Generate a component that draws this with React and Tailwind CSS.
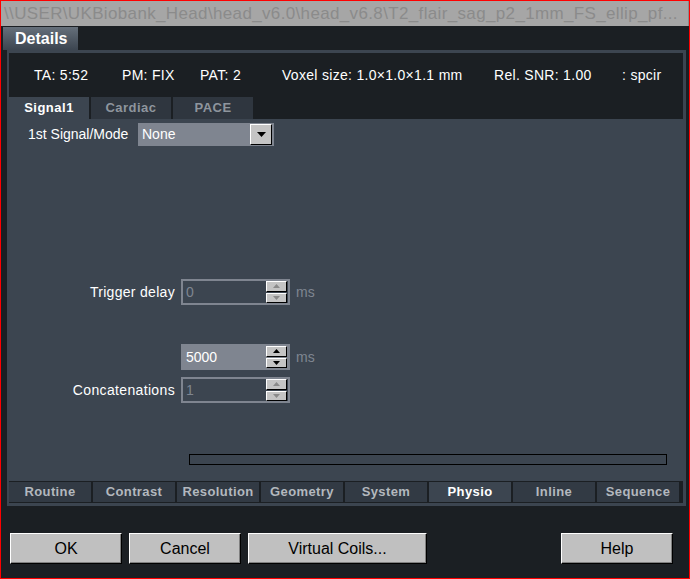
import React from 'react'

const DARK = 'bg-[#1b1f23]'

const SubTab = ({ label, active }) => (
  <div
    className={`w-[80px] h-[22px] flex items-center justify-center text-[13px] font-bold tracking-[0.5px] ${
      active ? 'bg-[#3c4550] text-white' : 'bg-[#2f363f] text-[#8e959d]'
    }`}
  >
    {label}
  </div>
)

const BottomTab = ({ label, active }) => (
  <div
    className={`w-[82px] h-[20px] flex items-center justify-center text-[13px] font-bold tracking-[0.4px] ${
      active ? 'bg-[#3c4550] text-white' : 'bg-[#323a44] text-[#b3b8be]'
    }`}
  >
    {label}
  </div>
)

const Arrow = ({ up, enabled }) => (
  <svg width="7" height="4" viewBox="0 0 7 4">
    <polygon
      points={up ? '3.5,0 7,4 0,4' : '0,0 7,0 3.5,4'}
      fill={enabled ? '#000' : '#8a8a8a'}
    />
  </svg>
)

const SpinBtn = ({ up, enabled }) => (
  <div className="w-[21px] h-[11px] bg-[#c4c4c4] flex items-center justify-center border-t border-l border-white border-r border-b border-r-[#000] border-b-[#000]">
    <Arrow up={up} enabled={enabled} />
  </div>
)

const SpinBox = ({ value, enabled }) => (
  <div
    className={`w-[109px] h-[26px] flex items-stretch border-2 border-[#7f8590] ${
      enabled ? 'bg-[#7f8590] text-white' : 'bg-[#3c4550] text-[#7f8590]'
    }`}
  >
    <div className="flex-1 flex items-center pl-[3px] text-[14px]">{value}</div>
    <div className="flex flex-col gap-[1px] pr-[1px]">
      <SpinBtn up enabled={enabled} />
      <SpinBtn enabled={enabled} />
    </div>
  </div>
)

const Button = ({ label, width }) => (
  <button
    type="button"
    className={`${width} h-[31px] bg-[#c0c0c0] text-black text-[16px] border-t border-l border-white border-r border-b border-r-black border-b-black shadow-[inset_-1px_-1px_0_#808080]`}
  >
    {label}
  </button>
)

export default function App() {
  const bottomTabs = ['Routine', 'Contrast', 'Resolution', 'Geometry', 'System', 'Physio', 'Inline', 'Sequence']

  return (
    <div className={`w-[690px] h-[579px] border border-[#ff0000] ${DARK} flex flex-col font-['Liberation_Sans',Arial,sans-serif] overflow-hidden`}>
      {/* Title bar */}
      <div className="h-[25px] bg-[#a6a6a6] text-[#8b8b8b] text-[17px] tracking-[0.35px] leading-[25px] pl-[3px] whitespace-nowrap overflow-hidden border-r border-[#8a8a8a]">
        {'\\\\USER\\UKBiobank_Head\\head_v6.0\\head_v6.8\\T2_flair_sag_p2_1mm_FS_ellip_pf...'}
      </div>

      {/* Details tab */}
      <div className="mt-[1px] ml-[2px] w-[75px] h-[23px] bg-gradient-to-b from-[#66707b] to-[#3c4550] text-white font-bold text-[16px] flex items-center pl-[12px]">
        Details
      </div>

      {/* Frame */}
      <div className="ml-[6px] w-[679px] bg-[#3c4550] pl-[2px] pr-[3px] pt-[3px] pb-[3px] flex flex-col">
        {/* Info row */}
        <div className={`${DARK} h-[44px] flex items-center text-white text-[14px] tracking-[0.3px] pl-[25px] whitespace-nowrap`}>
          <span className="w-[88px]">TA: 5:52</span>
          <span className="w-[78px]">PM: FIX</span>
          <span className="w-[82px]">PAT: 2</span>
          <span className="w-[212px]">Voxel size: 1.0×1.0×1.1 mm</span>
          <span className="w-[128px]">Rel. SNR: 1.00</span>
          <span>: spcir</span>
        </div>

        {/* Sub tabs */}
        <div className={`${DARK} flex gap-[2px]`}>
          <SubTab label="Signal1" active />
          <SubTab label="Cardiac" />
          <SubTab label="PACE" />
        </div>

        {/* Panel */}
        <div className="h-[362px] bg-[#3c4550] flex flex-col text-white text-[14px]">
          <div className="flex items-center pt-[4px] pl-[19px]">
            <span className="w-[110px]">1st Signal/Mode</span>
            <div className="w-[136px] h-[23px] bg-[#7f8590] flex items-center justify-between pl-[4px] pr-[2px]">
              <span>None</span>
              <div className="w-[22px] h-[21px] bg-[#c4c4c4] border-t border-l border-white border-r border-b border-r-black border-b-black flex items-center justify-center">
                <svg width="9" height="5" viewBox="0 0 9 5">
                  <polygon points="0,0 9,0 4.5,5" fill="#000" />
                </svg>
              </div>
            </div>
          </div>

          <div className="flex items-center mt-[133px]">
            <span className="w-[166px] text-right tracking-[0.3px]">Trigger delay</span>
            <div className="ml-[6px]">
              <SpinBox value="0" />
            </div>
            <span className="ml-[6px] text-[#7f8590]">ms</span>
          </div>

          <div className="flex items-center mt-[39px]">
            <span className="w-[166px]" />
            <div className="ml-[6px]">
              <SpinBox value="5000" enabled />
            </div>
            <span className="ml-[6px] text-[#7f8590]">ms</span>
          </div>

          <div className="flex items-center mt-[7px]">
            <span className="w-[166px] text-right tracking-[0.35px]">Concatenations</span>
            <div className="ml-[6px]">
              <SpinBox value="1" />
            </div>
          </div>

          <div className="ml-[180px] mt-[51px] w-[478px] h-[11px] border border-black" />
        </div>

        {/* Bottom tabs */}
        <div className={`${DARK} flex gap-[2px] py-[1px]`}>
          {bottomTabs.map((t) => (
            <BottomTab key={t} label={t} active={t === 'Physio'} />
          ))}
        </div>
      </div>

      {/* Buttons */}
      <div className="flex items-center mt-[27px] ml-[9px]">
        <Button label="OK" width="w-[112px]" />
        <div className="ml-[7px]">
          <Button label="Cancel" width="w-[112px]" />
        </div>
        <div className="ml-[7px]">
          <Button label="Virtual Coils..." width="w-[179px]" />
        </div>
        <div className="ml-[134px]">
          <Button label="Help" width="w-[112px]" />
        </div>
      </div>
    </div>
  )
}
